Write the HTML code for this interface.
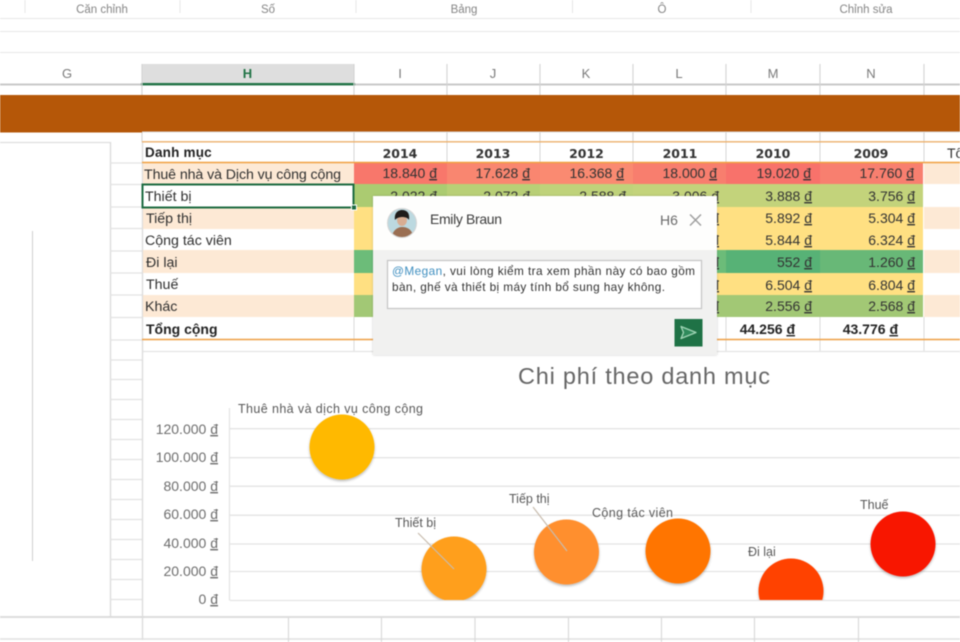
<!DOCTYPE html>
<html lang="vi"><head><meta charset="utf-8"><title>Excel</title>
<style>
html,body{margin:0;padding:0;background:#fff;width:960px;height:642px;overflow:hidden}
svg{display:block;filter:blur(.45px)}
text{font-family:"Liberation Sans","Noto Sans CJK SC",sans-serif;font-size:14px;fill:#2a2a2a}
.u{text-decoration:underline}
.r{font-size:11.5px;fill:#858585;text-anchor:middle}
.c{font-size:13px;fill:#7a7a7a;text-anchor:middle}
.y{font-family:"DejaVu Sans",sans-serif;font-size:12.5px;font-weight:bold;text-anchor:middle;fill:#333}
.l{font-size:14.2px;fill:#303030}
.v{font-size:14px;text-anchor:end;fill:#333}
.b{font-weight:bold;font-size:14px;fill:#222}
.a{font-size:14px;fill:#6d6d6d;text-anchor:end}
.d{font-size:12.5px;fill:#595959}
.m{stroke:#e4e4e4;stroke-width:1.3;fill:none}
</style></head><body>
<svg width="960" height="642" viewBox="0 0 960 642" xmlns="http://www.w3.org/2000/svg">
<defs>
<filter id="s" x="-20%" y="-20%" width="140%" height="140%"><feDropShadow dx="0" dy="1.5" stdDeviation="1.2" flood-color="#000" flood-opacity=".28"/></filter>
<filter id="ds" x="-5%" y="-5%" width="110%" height="110%"><feDropShadow dx="0" dy="0" stdDeviation="1" flood-color="#000" flood-opacity=".2"/></filter>
<clipPath id="cp"><rect x="229" y="400" width="731" height="200"/></clipPath>
<clipPath id="av"><circle cx="402" cy="223" r="14.5"/></clipPath>
</defs>

<!-- ribbon -->
<path d="M25 0V13M180 0V13M356 0V13M572.5 0V13M751 0V13" stroke="#e6e6e6"/>
<text class="r" x="102" y="13">Căn chỉnh</text>
<text class="r" x="268" y="13">Số</text>
<text class="r" x="464" y="13">Bảng</text>
<text class="r" x="662" y="13">Ô</text>
<text class="r" x="866" y="13">Chỉnh sửa</text>
<path d="M0 18.5H960M0 31.5H960M0 52.5H960" stroke="#e8e8e8" stroke-width="1"/>

<!-- column headers -->
<rect x="142" y="64" width="212" height="20" fill="#dedede"/>
<rect x="0" y="83.5" width="960" height="2" fill="#c9c9c9"/>
<rect x="141" y="83" width="214" height="2.4" fill="#217346"/>
<path d="M142 64V142M354 64V142M447 64V142M540 64V142M633 64V142M726 64V142M820 64V142M924 64V142" stroke="#d2d2d2" stroke-width="1.1"/>
<text class="c" x="67" y="78">G</text>
<text class="c" x="247.500" y="78" style="fill:#217346;font-weight:bold">H</text>
<text class="c" x="400" y="78">I</text>
<text class="c" x="493" y="78">J</text>
<text class="c" x="586" y="78">K</text>
<text class="c" x="679" y="78">L</text>
<text class="c" x="773" y="78">M</text>
<text class="c" x="871" y="78">N</text>

<!-- banner -->
<rect x="0" y="95" width="960" height="37.500" fill="#b55708"/>

<!-- left grid -->
<path d="M0 142.500H110" stroke="#dedede" stroke-width="1.2"/>
<path d="M110.500 142V618M142.500 142V640" stroke="#dcdcdc" stroke-width="1.4"/>
<path d="M110 163H142M110 184.500H142M110 207H142M110 228.500H142M110 251H142M110 273H142M110 295H142M110 317.500H142M110 340H142M110 360H142M110 379.500H142M110 399.500H142M110 419.500H142M110 439.500H142M110 459.500H142M110 479.500H142M110 499.500H142M110 519.500H142M110 539.500H142M110 559.500H142M110 579.500H142M110 599.500H142" stroke="#e2e2e2" stroke-width="1.2"/>
<path d="M32.500 231V561" stroke="#d0d0d0" stroke-width="1"/>

<!-- table fills -->
<rect x="143" y="163" width="211" height="21" fill="#fde9d5"/>
<rect x="143" y="207" width="211" height="22" fill="#fde9d5"/>
<rect x="143" y="250" width="211" height="23" fill="#fde9d5"/>
<rect x="143" y="295" width="211" height="22" fill="#fde9d5"/>
<rect x="924" y="163" width="36" height="21" fill="#fde9d5"/>
<rect x="924" y="207" width="36" height="22" fill="#fde9d5"/>
<rect x="924" y="250" width="36" height="23" fill="#fde9d5"/>
<rect x="924" y="295" width="36" height="22" fill="#fde9d5"/>

<!-- heat rows -->
<rect x="354" y="163" width="93" height="21" fill="#f8776b"/>
<rect x="447" y="163" width="93" height="21" fill="#f98670"/>
<rect x="540" y="163" width="93" height="21" fill="#fa8a71"/>
<rect x="633" y="163" width="93" height="21" fill="#f87e6e"/>
<rect x="726" y="163" width="94" height="21" fill="#f8726b"/>
<rect x="820" y="163" width="103" height="21" fill="#f87f6f"/>
<rect x="354" y="184" width="93" height="23" fill="#abcb71"/>
<rect x="447" y="184" width="93" height="23" fill="#b8cf76"/>
<rect x="540" y="184" width="93" height="23" fill="#bfd27a"/>
<rect x="633" y="184" width="187" height="23" fill="#c3d37b"/>
<rect x="820" y="184" width="103" height="23" fill="#c3d37b"/>
<rect x="354" y="207" width="569" height="21.500" fill="#ffe082"/>
<rect x="354" y="228.500" width="569" height="21.500" fill="#ffe082"/>
<rect x="354" y="250" width="372" height="23" fill="#6cbc79"/>
<rect x="726" y="250" width="94" height="23" fill="#57b276"/>
<rect x="820" y="250" width="103" height="23" fill="#68b877"/>
<rect x="354" y="273" width="569" height="22" fill="#ffe082"/>
<rect x="354" y="295" width="569" height="22" fill="#a2c875"/>

<!-- table lines -->
<path d="M354 317V340M447 317V340M540 317V340M633 317V340M726 317V340M820 317V340M924 317V352M142 132H960" stroke="#dcdcdc" stroke-width="1"/>
<path d="M354 142V163M447 142V163M540 142V163M633 142V163M726 142V163M820 142V163M924 142V163" stroke="#d6d6d6"/>
<path d="M354 340V351M447 340V351M540 340V351M726 340V351M820 340V351" stroke="#dcdcdc"/>
<path d="M142 141.800H960" stroke="#edb06c" stroke-width="1.400"/>
<path d="M142 162.500H960" stroke="#f0a040" stroke-width="1.400"/>
<path d="M142 339.500H960" stroke="#ee9f45" stroke-width="1.500"/>

<!-- headers -->
<text class="b" x="145" y="157" style="font-size:13.500px;letter-spacing:.2px">Danh mục</text>
<text class="y" x="400" y="158">2014</text>
<text class="y" x="493" y="158">2013</text>
<text class="y" x="586.500" y="158">2012</text>
<text class="y" x="680" y="158">2011</text>
<text class="y" x="773" y="158">2010</text>
<text class="y" x="871" y="158">2009</text>
<text x="947" y="158" style="font-size:14px;fill:#333">Tổ</text>

<!-- labels -->
<text class="l" x="144" y="179" textLength="197">Thuê nhà và Dịch vụ công cộng</text>
<text class="l" x="146" y="223">Tiếp thị</text>
<text class="l" x="145" y="245">Cộng tác viên</text>
<text class="l" x="146" y="267">Đi lại</text>
<text class="l" x="146" y="289">Thuế</text>
<text class="l" x="145" y="311">Khác</text>
<text class="b" x="146" y="334">Tổng cộng</text>

<!-- selection -->
<rect x="142.500" y="184.500" width="211" height="23" fill="#fff" stroke="#1d6b41" stroke-width="2"/>
<text class="l" x="145" y="201">Thiết bị</text>
<rect x="351.500" y="205" width="5" height="5" fill="#1d6b41" stroke="#fff"/>

<!-- values -->
<text class="v" x="437" y="178">18.840 <tspan class="u">đ</tspan></text>
<text class="v" x="530" y="178">17.628 <tspan class="u">đ</tspan></text>
<text class="v" x="624" y="178">16.368 <tspan class="u">đ</tspan></text>
<text class="v" x="717" y="178">18.000 <tspan class="u">đ</tspan></text>
<text class="v" x="811" y="178">19.020 <tspan class="u">đ</tspan></text>
<text class="v" x="914" y="178">17.760 <tspan class="u">đ</tspan></text>
<text class="v" x="437" y="201">2.022 <tspan class="u">đ</tspan></text>
<text class="v" x="530" y="201">2.072 <tspan class="u">đ</tspan></text>
<text class="v" x="626" y="201">2.588 <tspan class="u">đ</tspan></text>
<text class="v" x="719" y="201">3.006 <tspan class="u">đ</tspan></text>
<text class="v" x="812" y="201">3.888 <tspan class="u">đ</tspan></text>
<text class="v" x="915" y="201">3.756 <tspan class="u">đ</tspan></text>
<text class="v" x="719" y="223">5.892 <tspan class="u">đ</tspan></text>
<text class="v" x="812" y="223">5.892 <tspan class="u">đ</tspan></text>
<text class="v" x="915" y="223">5.304 <tspan class="u">đ</tspan></text>
<text class="v" x="719" y="245">5.844 <tspan class="u">đ</tspan></text>
<text class="v" x="812" y="245">5.844 <tspan class="u">đ</tspan></text>
<text class="v" x="915" y="245">6.324 <tspan class="u">đ</tspan></text>
<text class="v" x="719" y="267">1.260 <tspan class="u">đ</tspan></text>
<text class="v" x="812" y="267">552 <tspan class="u">đ</tspan></text>
<text class="v" x="915" y="267">1.260 <tspan class="u">đ</tspan></text>
<text class="v" x="719" y="290">6.504 <tspan class="u">đ</tspan></text>
<text class="v" x="812" y="290">6.504 <tspan class="u">đ</tspan></text>
<text class="v" x="915" y="290">6.804 <tspan class="u">đ</tspan></text>
<text class="v" x="719" y="311">2.556 <tspan class="u">đ</tspan></text>
<text class="v" x="812" y="311">2.556 <tspan class="u">đ</tspan></text>
<text class="v" x="915" y="311">2.568 <tspan class="u">đ</tspan></text>
<text class="b" x="795" y="334" text-anchor="end">44.256 <tspan class="u">đ</tspan></text>
<text class="b" x="898" y="334" text-anchor="end">43.776 <tspan class="u">đ</tspan></text>

<!-- chart -->
<path d="M143 351.500H960" stroke="#e4e4e4" stroke-width="1.200"/>
<text x="518" y="384" textLength="252" style="font-size:23.500px;fill:#666">Chi phí theo danh mục</text>
<path class="m" d="M229.500 408V600.500M230 428.700H960M230 457.700H960M230 486.200H960M230 515.200H960M230 544H960M230 571.500H960M230 600.500H960"/>
<text class="a" x="218" y="434">120.000 <tspan class="u">đ</tspan></text>
<text class="a" x="218" y="462">100.000 <tspan class="u">đ</tspan></text>
<text class="a" x="218" y="491">80.000 <tspan class="u">đ</tspan></text>
<text class="a" x="218" y="519">60.000 <tspan class="u">đ</tspan></text>
<text class="a" x="218" y="548">40.000 <tspan class="u">đ</tspan></text>
<text class="a" x="218" y="576">20.000 <tspan class="u">đ</tspan></text>
<text class="a" x="218" y="604">0 <tspan class="u">đ</tspan></text>

<g clip-path="url(#cp)">
<circle cx="342" cy="447" r="32.500" fill="#ffb900" filter="url(#s)"/>
<circle cx="454" cy="569" r="32.500" fill="#ff9f1c" filter="url(#s)"/>
<circle cx="566.500" cy="552" r="32.500" fill="#ff8f2e" filter="url(#s)"/>
<circle cx="678" cy="551" r="32.500" fill="#ff7400" filter="url(#s)"/>
<circle cx="791" cy="591" r="32.500" fill="#ff4300" filter="url(#s)"/>
<circle cx="903" cy="544" r="32.500" fill="#f81600" filter="url(#s)"/>
</g>
<path d="M418 533L454 569M533 507L567 551" stroke="#c8bcae" stroke-width="1.200" fill="none"/>
<text class="d" x="238" y="413" textLength="185">Thuê nhà và dịch vụ công cộng</text>
<text class="d" x="395" y="527">Thiết bị</text>
<text class="d" x="509" y="503">Tiếp thị</text>
<text class="d" x="592" y="517" textLength="81">Cộng tác viên</text>
<text class="d" x="748" y="556">Đi lại</text>
<text class="d" x="860" y="509">Thuế</text>

<!-- bottom grid -->
<path d="M0 617H960" stroke="#dcdcdc" stroke-width="2"/>
<path d="M0 639H960" stroke="#e0e0e0" stroke-width="1.400"/>
<path d="M288.500 618V642M381.500 618V642M475 618V642M568.500 618V642M661.500 618V642M754.500 618V642M858.500 618V642" stroke="#d8d8d8" stroke-width="1.100"/>

<!-- comment card -->
<rect x="373" y="196" width="344" height="159" fill="#fefefd" filter="url(#ds)"/>
<rect x="373" y="250" width="344" height="105" fill="#f1f1f0"/>
<g clip-path="url(#av)">
<rect x="387" y="208" width="30" height="30" fill="#bcd9e0"/>
<path d="M391 240C392 230 398 227 402 227C408 227 413 230 414 240Z" fill="#9a6e52"/>
<ellipse cx="402" cy="220" rx="5" ry="6" fill="#d8ad92"/>
<path d="M395 220C394 213 398 210 402 210C407 210 410 213 409 220C407 216 398 216 395 220Z" fill="#1f1c1a"/>
</g>
<circle cx="402" cy="223" r="14.500" fill="none" stroke="#d5d5d5"/>
<text x="430" y="224" textLength="72" style="font-size:14px;fill:#3c3c3c">Emily Braun</text>
<text x="660" y="225" style="font-size:14px;fill:#6b6b6b">H6</text>
<path d="M690 214.500L701 225.500M701 214.500L690 225.500" stroke="#9c9c9c" stroke-width="1.400" fill="none"/>
<rect x="387.500" y="260.500" width="314" height="48" fill="#fff" stroke="#c4c4c4" stroke-width="1.200"/>
<text x="392" y="275" style="font-size:11.800px;fill:#333" textLength="303"><tspan style="fill:#3f8fc0">@Megan</tspan>, vui lòng kiểm tra xem phần này có bao gồm</text>
<text x="392" y="291" style="font-size:11.800px;fill:#333" textLength="273">bàn, ghế và thiết bị máy tính bổ sung hay không.</text>
<rect x="674.500" y="319" width="28" height="27.500" fill="#1f7246"/>
<path d="M681 326.500L696 332.500L681 338.500L683.500 332.500Z" fill="#2f8a5b" stroke="#a2d5b6" stroke-width="1.300" stroke-linejoin="round"/>
</svg>
</body></html>
